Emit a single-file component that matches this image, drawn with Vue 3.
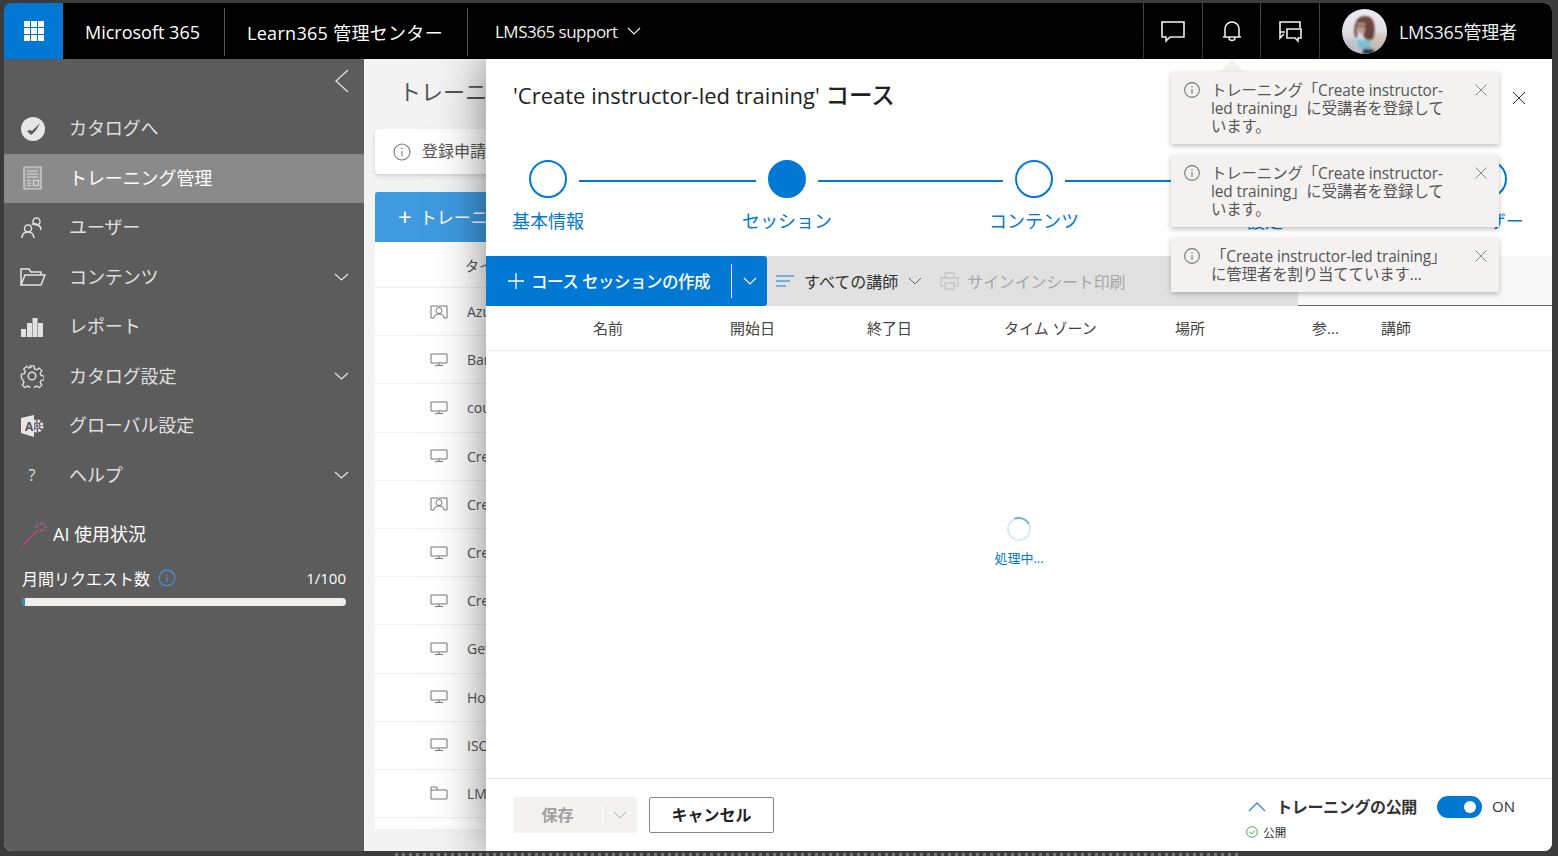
<script setup>
const navItems = [
  { label: 'カタログへ', icon: 'catalog' },
  { label: 'トレーニング管理', icon: 'training', active: true },
  { label: 'ユーザー', icon: 'users' },
  { label: 'コンテンツ', icon: 'folder', more: true },
  { label: 'レポート', icon: 'report' },
  { label: 'カタログ設定', icon: 'gear', more: true },
  { label: 'グローバル設定', icon: 'lang' },
  { label: 'ヘルプ', icon: 'help', more: true },
]

const rows = [
  { text: 'Azure', icon: 'person' },
  { text: 'Bar', icon: 'screen' },
  { text: 'course', icon: 'screen' },
  { text: 'Create', icon: 'screen' },
  { text: 'Create', icon: 'person' },
  { text: 'Create', icon: 'screen' },
  { text: 'Create', icon: 'screen' },
  { text: 'Get', icon: 'screen' },
  { text: 'How', icon: 'screen' },
  { text: 'ISO', icon: 'screen' },
  { text: 'LMS', icon: 'folder' },
]

const steps = [
  { label: '基本情報' },
  { label: 'セッション', filled: true },
  { label: 'コンテンツ' },
  { label: '設定' },
  { label: 'ユーザー' },
]

const columns = [
  { label: '名前', w: 137 },
  { label: '開始日', w: 137 },
  { label: '終了日', w: 137 },
  { label: 'タイム ゾーン', w: 171 },
  { label: '場所', w: 137 },
  { label: '参...', w: 69 },
  { label: '講師', w: 100 },
]

const toasts = [
  'トレーニング「Create instructor-led training」に受講者を登録しています。',
  'トレーニング「Create instructor-led training」に受講者を登録しています。',
  '「Create instructor-led training」に管理者を割り当てています...',
]
</script>

<template>
  <div class="desktop">
    <div class="window">
      <header class="topbar">
        <div class="waffle">
          <svg width="20" height="20" viewBox="0 0 20 20" fill="#fff">
            <template v-for="y in [0, 7, 14]" :key="y">
              <rect v-for="x in [0, 7, 14]" :key="x" :x="x" :y="y" width="6" height="6" />
            </template>
          </svg>
        </div>
        <div class="brand">Microsoft 365</div>
        <div class="brand second">Learn365 管理センター</div>
        <div class="tenant">
          LMS365 support
          <svg width="14" height="8" viewBox="0 0 14 8" fill="none" stroke="#fff" stroke-width="1.2"><path d="M1 1l6 6 6-6" /></svg>
        </div>
        <div class="top-icons">
          <button type="button" class="top-btn">
            <svg width="26" height="24" viewBox="0 0 26 24" fill="none" stroke="#fff" stroke-width="1.6"><path d="M2 3h22v15H10l-4 4v-4H2z" /></svg>
          </button>
          <button type="button" class="top-btn">
            <svg width="20" height="24" viewBox="0 0 20 24" fill="none" stroke="#fff" stroke-width="1.6"><path d="M3 18V10a7 7 0 0 1 14 0v8zM1 18h18M7 18.5a3 3 0 0 0 6 0" /></svg>
          </button>
          <button type="button" class="top-btn">
            <svg width="26" height="24" viewBox="0 0 26 24" fill="none" stroke="#fff" stroke-width="1.6"><path d="M8 13H3V3h20v6M3 13v6l4-4M10 10h14v9h-3v3l-3-3h-8z" /></svg>
          </button>
        </div>
        <div class="account">
          <svg class="avatar" width="45" height="45" viewBox="0 0 45 45">
            <defs>
              <clipPath id="avatar-clip"><circle cx="22.500" cy="22.500" r="22.500" /></clipPath>
              <filter id="avatar-soft"><feGaussianBlur stdDeviation=".8" /></filter>
            </defs>
            <g clip-path="url(#avatar-clip)">
              <rect width="45" height="45" fill="#ecebf2" />
              <g filter="url(#avatar-soft)">
                <rect x="29" y="24" width="16" height="21" fill="#e9dad0" />
                <rect x="0" y="30" width="13" height="15" fill="#dcdcea" />
                <path d="M14 31h15v9H17z" fill="#8fdcee" />
                <path d="M13 28c-2-12 1-21 10-21s11 9 9 22c-3 3-7 3-9 0-2-2-2-4-1-6l1-8-8 0 0 11c0 3-1 4-2 2z" fill="#6f4a3c" />
                <path d="M15 14h8l0 8c-2 3-5 3-7 1z" fill="#c9a091" />
                <path d="M15 17h8" stroke="#4a3a36" stroke-width="1.200" />
                <path d="M21 40h11v5H21z" fill="#3f4244" />
              </g>
            </g>
          </svg>
          <span>LMS365管理者</span>
        </div>
      </header>

      <div class="body">
        <aside class="sidebar">
          <div class="collapse">
            <svg width="14" height="24" viewBox="0 0 14 24" fill="none" stroke="#ddd" stroke-width="1.4"><path d="M13 1L1 12l12 11" /></svg>
          </div>
          <nav class="nav">
            <div v-for="item in navItems" :key="item.label" class="nav-item" :class="{ active: item.active }">
              <span class="nav-icon" :class="`i-${item.icon}`">
                <svg v-if="item.icon === 'catalog'" width="26" height="26" viewBox="0 0 26 26">
                  <circle cx="13" cy="13" r="12" fill="#e6e6e6" />
                  <path d="M7 15l4 4c3-2 7-7 9-12-3 3-6 6-8 8l-2-1z" fill="#5c5c5c" />
                  <path d="M21 5c1 4 1 8-2 12-2 2-4 3-7 3l2-2c3-2 5-8 7-13z" fill="#e6e6e6" />
                </svg>
                <svg v-else-if="item.icon === 'training'" width="20" height="24" viewBox="0 0 20 24" fill="none" stroke="#d8d8d8" stroke-width="1.200">
                  <path d="M1 1h17v22H1z" fill="#9a9a9a" />
                  <path d="M4 5h11M4 8h11M4 11h11M4 14.500h4M4 17h4M4 19.500h4" />
                  <path d="M10.500 14.500h5v5h-5z" />
                </svg>
                <svg v-else-if="item.icon === 'users'" width="24" height="24" viewBox="0 0 24 24" fill="none" stroke="#e2e2e2" stroke-width="1.500">
                  <circle cx="16.500" cy="5.500" r="3.500" /><circle cx="8" cy="12.500" r="3.500" />
                  <path d="M11.500 8.500c2-1 5-.5 6.500 .5 2 1 3 3 3 5M2 22c0-4 2-6 6-6s5.500 2 6 6" />
                </svg>
                <svg v-else-if="item.icon === 'folder'" width="26" height="20" viewBox="0 0 26 20" fill="none" stroke="#e2e2e2" stroke-width="1.500">
                  <path d="M1 18V2h8l2 3h10v3M1 18l4-10h20l-4 10z" />
                </svg>
                <svg v-else-if="item.icon === 'report'" width="24" height="20" viewBox="0 0 24 20" fill="#e2e2e2">
                  <rect x="1" y="12" width="5" height="8" /><rect x="7" y="6" width="5" height="14" />
                  <rect x="12.500" y="1" width="5" height="19" /><rect x="18" y="6" width="5" height="14" />
                </svg>
                <svg v-else-if="item.icon === 'gear'" width="24" height="24" viewBox="0 0 24 24" fill="none" stroke="#e2e2e2" stroke-width="1.400">
                  <circle cx="12" cy="12" r="3.800" />
                  <path d="M10 1h4l.7 3.300 2.100.9 2.800-1.800 2.900 2.900-1.800 2.800.9 2.100 3.400.8v4l-3.400.7-.9 2.100 1.800 2.800-2.900 2.900-2.800-1.800-2.100.9-.7 3.300h-4l-.7-3.300-2.100-.9-2.800 1.800-2.900-2.900 1.800-2.800-.9-2.100L.5 14v-4l3.400-.7.9-2.100L3 4.400l2.900-2.900 2.800 1.800 2.100-.9z" transform="scale(.93) translate(1 1)" />
                </svg>
                <svg v-else-if="item.icon === 'lang'" width="24" height="24" viewBox="0 0 24 24">
                  <circle cx="17" cy="12" r="5" fill="none" stroke="#e2e2e2" stroke-width="3" stroke-dasharray="2.500 1.400" />
                  <circle cx="17" cy="12" r="2" fill="none" stroke="#e2e2e2" />
                  <path d="M1 4l13-3v22L1 19z" fill="#e6e6e6" />
                </svg>
                <span v-else class="help-mark">?</span>
                <b v-if="item.icon === 'lang'" class="lang-a">A</b>
              </span>
              <span class="nav-label">{{ item.label }}</span>
              <svg v-if="item.more" class="nav-more" width="15" height="8" viewBox="0 0 15 8" fill="none" stroke="#e6e6e6" stroke-width="1.200"><path d="M1 1l6.500 6L14 1" /></svg>
            </div>
          </nav>
          <div class="ai-head">
            <svg width="26" height="26" viewBox="0 0 26 26" fill="none">
              <path d="M1 25L16 10" stroke="#c0408f" stroke-width="1.500" />
              <path d="M19 2v3M19 9v3M13 7h3M22 7h3M15 3l2 2M23 3l-2 2M23 11l-2-2" stroke="#c8609f" stroke-width="1" />
            </svg>
            <span>AI 使用状況</span>
          </div>
          <div class="usage">
            <div class="usage-row">
              <span>月間リクエスト数</span>
              <svg width="18" height="18" viewBox="0 0 18 18" fill="none" stroke="#4a90e2" stroke-width="1.200">
                <circle cx="9" cy="9" r="7.800" /><path d="M9 8v5M9 5v1.500" />
              </svg>
              <span class="usage-num">1/100</span>
            </div>
            <div class="usage-bar"><i /></div>
          </div>
        </aside>

        <section class="behind">
          <h1>トレーニング管理</h1>
          <div class="notice">
            <svg width="18" height="18" viewBox="0 0 18 18" fill="none" stroke="#777" stroke-width="1.100"><circle cx="9" cy="9" r="8" /><path d="M9 8v5M9 4.800v1.400" /></svg>
            <span>登録申請</span>
          </div>
          <div class="behind-btn"><span class="plus">+</span> トレーニング</div>
          <div class="behind-table">
            <div class="behind-head">タイトル</div>
            <div v-for="(row, i) in rows" :key="i" class="behind-row">
              <svg v-if="row.icon === 'screen'" width="18" height="14" viewBox="0 0 18 14" fill="none" stroke="#777"><path d="M1 1h16v9H1zM5 12.500h8" /><path d="M9 10v2.500" /></svg>
              <svg v-else-if="row.icon === 'person'" width="18" height="14" viewBox="0 0 18 14" fill="none" stroke="#777"><path d="M4 13H1V1h16v12h-3" /><circle cx="9" cy="5.500" r="3" /><path d="M4 13c0-3 2-4 5-4s5 1 5 4" /></svg>
              <svg v-else width="18" height="14" viewBox="0 0 18 14" fill="none" stroke="#777"><path d="M1 13V1h6v3h10v9zM1 4h6" /></svg>
              <span>{{ row.text }}</span>
            </div>
            <div class="behind-end" />
          </div>
        </section>

        <section class="panel">
          <button type="button" class="panel-close">
            <svg width="14" height="14" viewBox="0 0 14 14" fill="none" stroke="#333" stroke-width="1"><path d="M1 1l12 12M13 1L1 13" /></svg>
          </button>
          <h2>'Create instructor-led training' <span class="title-jp">コース</span></h2>
          <div class="stepper">
            <template v-for="(step, i) in steps" :key="step.label">
              <div class="step">
                <span class="dot" :class="{ filled: step.filled }" />
                <span class="step-label">{{ step.label }}</span>
              </div>
              <span v-if="i < steps.length - 1" class="step-line" :class="`l${i}`" />
            </template>
          </div>
          <div class="toolbar">
            <div class="create">
              <span class="create-main"><svg width="16" height="16" viewBox="0 0 16 16" stroke="#fff" stroke-width="1.300"><path d="M8 0v16M0 8h16" /></svg>コース セッションの作成</span>
              <span class="create-more"><svg width="14" height="8" viewBox="0 0 14 8" fill="none" stroke="#fff" stroke-width="1.200"><path d="M1 1l6 6 6-6" /></svg></span>
            </div>
            <div class="tool">
              <svg width="18" height="12" viewBox="0 0 18 12" stroke="#5a9bd5" stroke-width="1.300"><path d="M0 1h18M0 6h14M0 11h10" /></svg>
              <span>すべての講師</span>
              <svg width="14" height="8" viewBox="0 0 14 8" fill="none" stroke="#666"><path d="M1 1l6 6 6-6" /></svg>
            </div>
            <div class="tool disabled">
              <svg width="19" height="18" viewBox="0 0 19 18" fill="none" stroke="#c4c4c4" stroke-width="1.300"><path d="M5 6V1h9v5M5 14H1V6h17v8h-4M5 11h9v6H5z" /></svg>
              <span>サインインシート印刷</span>
            </div>
            <div class="search-box" />
          </div>
          <div class="columns">
            <span v-for="col in columns" :key="col.label" :style="{ width: col.w + 'px' }">{{ col.label }}</span>
          </div>
          <div class="loading">
            <span class="spinner" />
            <span class="loading-text">処理中...</span>
          </div>
          <footer class="panel-foot">
            <div class="save">
              <span class="save-main">保存</span>
              <span class="save-more"><svg width="14" height="8" viewBox="0 0 14 8" fill="none" stroke="#aaa"><path d="M1 1l6 6 6-6" /></svg></span>
            </div>
            <button type="button" class="cancel">キャンセル</button>
            <div class="publish">
              <div class="publish-row">
                <svg width="18" height="10" viewBox="0 0 18 10" fill="none" stroke="#3f86cf" stroke-width="1.300"><path d="M1 9l8-8 8 8" /></svg>
                <strong>トレーニングの公開</strong>
                <span class="toggle"><i /></span>
                <span class="on">ON</span>
              </div>
              <div class="publish-state">
                <svg width="12" height="12" viewBox="0 0 12 12" fill="none" stroke="#4caf50"><circle cx="6" cy="6" r="5.300" /><path d="M3.500 6l2 2 3-3.500" /></svg>
                <span>公開</span>
              </div>
            </div>
          </footer>
        </section>
      </div>

      <div class="toast-arrow" />
      <div class="toasts">
        <div v-for="(msg, i) in toasts" :key="i" class="toast">
          <svg width="16" height="16" viewBox="0 0 16 16" fill="none" stroke="#777" stroke-width="1.100"><circle cx="8" cy="8" r="7.400" /><path d="M8 7v5M8 4v1.400" /></svg>
          <p>{{ msg }}</p>
          <svg class="toast-x" width="12" height="12" viewBox="0 0 12 12" fill="none" stroke="#888"><path d="M.5 .5l11 11M11.500 .5l-11 11" /></svg>
        </div>
      </div>
    </div>
    <div class="under-text" />
  </div>
</template>

<style>
html, body { margin: 0; background: #3b3b3b; }
</style>

<style scoped>
.desktop { position: relative; box-sizing: border-box; width: 1558px; height: 856px; padding: 3px 6px 5px 4px; overflow: hidden; background: #3b3b3b; font-family: "Open Sans", "Noto Sans CJK JP", sans-serif; }
.under-text { position: absolute; left: 395px; bottom: 0; width: 845px; height: 3px; background: repeating-linear-gradient(90deg, #777 0 3px, transparent 3px 7px); }
.window { position: relative; height: 100%; display: flex; flex-direction: column; border-radius: 8px; overflow: hidden; background: #fff; }
.topbar { flex: 0 0 56px; display: flex; align-items: stretch; color: #fff; background: #000; }
.waffle { width: 59px; display: grid; place-items: center; background: #0078d4; }
.brand { width: 162px; margin: 5px 0 3px; display: flex; align-items: center; padding-left: 22px; box-sizing: border-box; border-right: 1px solid #555; font-size: 18px; }
.brand.second { width: 243px; padding-left: 22px; letter-spacing: .3px; }
.tenant { flex: 1; display: flex; align-items: center; gap: 9px; padding-left: 27px; font-size: 17px; letter-spacing: -.5px; }
.top-icons { display: flex; }
.top-btn { width: 58.670px; padding: 0; display: grid; place-items: center; border: 0; border-left: 1px solid #444; background: none; }
.account { width: 233px; box-sizing: border-box; display: flex; align-items: center; gap: 12px; padding-left: 22px; border-left: 1px solid #444; font-size: 18px; letter-spacing: -.3px; }
.avatar { flex: none; }

.body { flex: 1; min-height: 0; display: flex; }
.sidebar { flex: 0 0 360px; display: flex; flex-direction: column; color: #e0e0e0; background: #5c5c5c; }
.collapse { height: 45px; padding: 10px 15px 0 0; box-sizing: border-box; display: flex; justify-content: flex-end; }
.nav-item { height: 49.500px; display: flex; align-items: center; padding-right: 15px; font-size: 18px; }
.nav-item.active { color: #fff; background: #8a8a8a; }
.nav-icon { position: relative; width: 65px; padding-left: 16px; box-sizing: border-box; display: flex; align-items: center; }
.i-training { padding-left: 19px; }
.nav-label { flex: 1; padding-bottom: 3px; letter-spacing: -.1px; }
.lang-a { position: absolute; left: 21px; top: 50%; transform: translateY(-50%); color: #555; font-size: 12px; }
.help-mark { width: 24px; text-align: center; font-size: 16px; }
.ai-head { margin: 20px 0 0 18px; display: flex; align-items: center; gap: 5px; color: #fff; font-size: 18px; }
.usage { margin: 20px 18px 0 18px; }
.usage-row { display: flex; align-items: center; gap: 8px; color: #fff; font-size: 16px; }
.usage-num { margin-left: auto; font-size: 15px; }
.usage-bar { height: 8px; margin-top: 8px; border-radius: 4px; overflow: hidden; background: #f0efee; }
.usage-bar i { display: block; width: 1%; height: 100%; background: #2b88d8; }

.behind { flex: 0 0 122px; overflow: hidden; padding-left: 11px; box-sizing: border-box; color: #555; background: #f3f3f3; white-space: nowrap; }
.behind h1 { margin: 16px 0 0 24px; font-size: 22px; font-weight: 400; line-height: 32px; }
.notice { width: 300px; height: 45px; margin-top: 22px; padding-left: 18px; box-sizing: border-box; display: flex; align-items: center; gap: 11px; border-radius: 4px; background: #fff; box-shadow: 0 2px 4px rgba(0,0,0,.15); font-size: 16px; }
.notice span { padding-bottom: 3px; }
.behind-btn { width: 300px; height: 50px; margin-top: 18px; padding: 0 0 2px 23px; box-sizing: border-box; display: flex; align-items: center; border-radius: 3px 3px 0 0; color: #fff; background: #3f9ae0; font-size: 17px; }
.plus { margin-right: 8px; font-size: 24px; }
.behind-table { width: 300px; background: #fff; }
.behind-head { height: 46px; padding-left: 90px; box-sizing: border-box; display: flex; align-items: center; border-bottom: 1px solid #eee; font-size: 14px; }
.behind-row { height: 48.200px; padding-left: 55px; box-sizing: border-box; display: flex; align-items: center; gap: 19px; border-bottom: 1px solid #f0f0f0; font-size: 14px; }
.behind-end { height: 11px; }

.panel { position: relative; z-index: 1; flex: 1; min-width: 0; display: flex; flex-direction: column; background: #fff; box-shadow: 0 0 44px rgba(0,0,0,.5); }
.panel-close { position: absolute; top: 32px; right: 26px; padding: 0; display: flex; border: 0; background: none; }
.panel h2 { margin: 19px 0 0 27px; color: #222; font-size: 22px; font-weight: 500; line-height: 34px; }
.title-jp { font-size: 23.500px; }
.stepper { height: 96px; margin-top: 48px; display: flex; align-items: flex-start; padding-left: 43px; }
.step { position: relative; flex: none; width: 38px; height: 38px; }
.dot { display: block; box-sizing: border-box; width: 38px; height: 38px; border: 2px solid #0078d4; border-radius: 50%; background: #fff; }
.dot.filled { background: #0078d4; }
.step-label { position: absolute; top: 49px; left: 50%; transform: translateX(-50%); color: #0078d4; font-size: 18px; line-height: 24px; white-space: nowrap; }
.step-line { height: 2px; margin: 20px 12px 0; background: #0078d4; }
.l0 { width: 177px; }
.l1 { width: 185px; }
.l2 { width: 169px; }
.l3 { width: 161px; }
.toolbar { flex: 0 0 50px; display: flex; align-items: stretch; color: #333; background: #e1e1e1; }
.create { width: 281px; display: flex; align-items: center; border-radius: 0 3px 3px 0; color: #fff; background: #0078d4; font-size: 16.500px; font-weight: 500; }
.create-main { width: 245px; box-sizing: border-box; display: flex; align-items: center; gap: 7px; padding-left: 22px; letter-spacing: -.5px; }
.create-more { width: 36px; height: 34px; display: grid; place-items: center; border-left: 1px solid #fff; box-sizing: border-box; }
.tool { display: flex; align-items: center; gap: 10px; padding-left: 9px; font-size: 16px; }
.tool + .tool { padding-left: 18px; }
.tool.disabled { gap: 8px; color: #a6a6a6; letter-spacing: -.2px; }
.search-box { width: 254px; margin-left: auto; box-sizing: border-box; border-bottom: 1px solid #666; background: #f8f8f8; }
.columns { flex: 0 0 45px; box-sizing: border-box; display: flex; align-items: center; padding: 0 0 2px 107px; border-bottom: 1px solid #eee; color: #444; font-size: 15px; }
.loading { flex: 1; display: flex; flex-direction: column; align-items: center; gap: 8px; padding: 166px 0 0 0; }
.spinner { width: 24px; height: 24px; box-sizing: border-box; border: 2px solid #d8e9f7; border-top-color: #6aaee6; border-radius: 50%; transform: rotate(20deg); }
.loading-text { color: #0078d4; font-size: 13px; line-height: 18px; }
.panel-foot { flex: 0 0 73px; box-sizing: border-box; display: flex; align-items: flex-start; gap: 12px; padding: 18px 37px 0 27px; border-top: 1px solid #e6e6e6; }
.save { width: 124px; height: 36px; display: flex; align-items: center; border-radius: 2px; color: #a0a0a0; background: #f3f2f1; font-size: 16px; font-weight: 700; }
.save-main { width: 89px; padding-bottom: 2px; text-align: center; }
.save-more { height: 18px; padding-left: 10px; display: flex; align-items: center; border-left: 1px solid #fff; }
.cancel { width: 125px; height: 36px; padding: 0 0 2px; border: 1px solid #8a8886; border-radius: 2px; color: #222; background: #fff; font: 700 16px "Open Sans", "Noto Sans CJK JP", sans-serif; }
.publish { margin: -1px 0 0 auto; color: #333; }
.publish-row { display: flex; align-items: center; height: 22px; font-size: 16px; }
.publish-row strong { margin: 0 20px 0 10px; padding-bottom: 2px; font-weight: 700; letter-spacing: -.35px; }
.toggle { width: 45px; height: 22px; position: relative; border-radius: 11px; background: #0078d4; }
.toggle i { position: absolute; top: 5px; right: 6px; width: 12px; height: 12px; border-radius: 50%; background: #fff; }
.on { margin-left: 10px; padding-bottom: 2px; font-size: 15px; }
.publish-state { margin: 6px 0 0 -2px; display: flex; align-items: center; gap: 5px; font-size: 11.500px; }

.toast-arrow { position: absolute; top: 56px; left: 1216px; z-index: 2; width: 0; height: 0; border: 12px solid transparent; border-top: 0; border-bottom: 13px solid #f3f2f1; }
.toasts { position: absolute; top: 69px; left: 1167px; z-index: 3; width: 328px; display: flex; flex-direction: column; gap: 11px; }
.toast { position: relative; box-sizing: border-box; display: flex; gap: 12px; padding: 10px 41px 8px 13px; background: #f3f2f1; box-shadow: 0 2px 5px rgba(0,0,0,.25); color: #555; }
.toast > svg:first-child { flex: none; }
.toast p { margin: 0 0 0 -1px; font-size: 15.400px; line-height: 18px; letter-spacing: -.1px; }
.toast-x { position: absolute; top: 12px; right: 12px; }
</style>
